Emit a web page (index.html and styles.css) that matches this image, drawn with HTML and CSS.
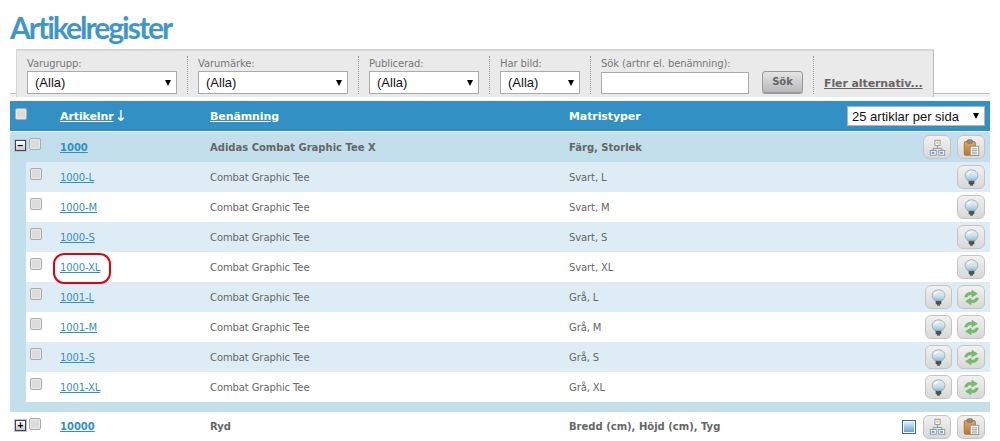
FILE: index.html
```html
<!DOCTYPE html>
<html lang="sv">
<head>
<meta charset="utf-8">
<title>Artikelregister</title>
<link rel="stylesheet" href="styles.css">
</head>
<body>
<svg class="defs" width="0" height="0" aria-hidden="true">
  <defs>
    <linearGradient id="bulb" x1="0" y1="0" x2="0" y2="1"><stop offset="0" stop-color="#e8eef1"/><stop offset=".55" stop-color="#cfe0ea"/><stop offset="1" stop-color="#7fbce0"/></linearGradient>
    <linearGradient id="clip" x1="0" y1="0" x2="0" y2="1"><stop offset="0" stop-color="#e2a762"/><stop offset="1" stop-color="#b9762e"/></linearGradient>
    <linearGradient id="win" x1="0" y1="0" x2="0" y2="1"><stop offset="0" stop-color="#dcebf6"/><stop offset="1" stop-color="#6aa3d3"/></linearGradient>
    <symbol id="i-tree" viewBox="0 0 20 20">
      <rect x="7" y="1.500" width="6" height="6" fill="#fff" stroke="#7f8d98"/><rect x="8.500" y="3" width="3" height="2.500" fill="#e8cf3a"/>
      <path d="M10 8v3M5 13.500v-2.500h10v2.500" fill="none" stroke="#7f8d98"/>
      <rect x="1.500" y="13.500" width="7" height="5.500" fill="#fff" stroke="#7f8d98"/><rect x="3" y="15" width="3.500" height="2.500" fill="#5aa9dd"/>
      <rect x="11.500" y="13.500" width="7" height="5.500" fill="#fff" stroke="#7f8d98"/><rect x="13" y="15" width="3.500" height="2.500" fill="#5aa9dd"/>
    </symbol>
    <symbol id="i-clip" viewBox="0 0 20 20">
      <rect x="1.500" y="3" width="13" height="16" rx="1.500" fill="url(#clip)" stroke="#a5692c"/>
      <rect x="5" y="1" width="6" height="4" rx="1" fill="#8f8f86" stroke="#77736a"/>
      <rect x="8.500" y="8.500" width="10" height="11" fill="#f6f6f3" stroke="#8e8e88"/>
      <path d="M10.500 11.500h6M10.500 13.500h6M10.500 15.500h6M10.500 17.500h6" stroke="#9a9a96"/>
    </symbol>
    <symbol id="i-bulb" viewBox="0 0 20 20">
      <path d="M10 1C5.600 1 2.500 4 2.500 7.600c0 3 2 4.400 3.400 6.400h8.200c1.400-2 3.400-3.400 3.400-6.400C17.500 4 14.400 1 10 1z" fill="url(#bulb)" stroke="#94a8b5"/>
      <path d="M5.500 6c1-1.800 2.600-2.600 4.500-2.600" fill="none" stroke="#fff" stroke-width="1.800"/>
      <rect x="6.800" y="14" width="6.400" height="4" fill="#6b6b64"/>
      <path d="M6.800 15.300h6.400M6.800 16.700h6.400" stroke="#3d3d38"/>
      <rect x="8.300" y="18" width="3.400" height="1.500" fill="#33332f"/>
    </symbol>
    <symbol id="i-sync" viewBox="0 0 20 20">
      <path d="M2 9.500C2.600 5.500 6 3.300 10.500 4V1.500l6.500 4-6.500 4V7C7.500 6.600 5.800 7.400 5 9.500z" fill="#74bd66" stroke="#5ea558" stroke-width=".5"/>
      <path d="M18 10.500c-.6 4-4 6.200-8.500 5.500v2.500l-6.500-4 6.500-4V13c3 .4 4.700-.4 5.500-2.500z" fill="#74bd66" stroke="#5ea558" stroke-width=".5"/>
    </symbol>
  </defs>
</svg>

<h1 class="title">Artikelregister</h1>

<div class="filter-wrap">
  <form class="filters">
    <div class="field f-group"><label>Varugrupp:</label><div class="select"><span>(Alla)</span><i class="caret"></i></div></div>
    <div class="field f-brand"><label>Varumärke:</label><div class="select"><span>(Alla)</span><i class="caret"></i></div></div>
    <div class="field f-pub"><label>Publicerad:</label><div class="select"><span>(Alla)</span><i class="caret"></i></div></div>
    <div class="field f-img"><label>Har bild:</label><div class="select"><span>(Alla)</span><i class="caret"></i></div></div>
    <div class="field f-search"><label>Sök (artnr el. benämning):</label><div class="search-line"><div class="input"></div><div class="btn-search">Sök</div></div></div>
    <div class="field f-more"><a href="#">Fler alternativ...</a></div>
  </form>
</div>
<div class="stripe"></div>

<div class="list">
  <div class="row head">
    <div class="col-tog"><b class="check"></b></div>
    <div class="col-nr"><a href="#">Artikelnr</a><span class="arrow">↓</span></div>
    <div class="col-name"><a href="#">Benämning</a></div>
    <div class="col-matrix">Matristyper</div>
    <div class="col-act"><div class="select per-page"><span>25 artiklar per sida</span><i class="caret"></i></div></div>
  </div>

  <div class="row group">
    <div class="col-tog"><b class="toggle">−</b><b class="check"></b></div>
    <div class="col-nr"><a href="#">1000</a></div>
    <div class="col-name">Adidas Combat Graphic Tee X</div>
    <div class="col-matrix">Färg, Storlek</div>
    <div class="col-act">
      <span class="ibtn"><svg><use href="#i-tree"/></svg></span>
      <span class="ibtn"><svg><use href="#i-clip"/></svg></span>
    </div>
  </div>

  <div class="children">
    <div class="row child">
      <div class="col-tog"><b class="check"></b></div>
      <div class="col-nr"><a href="#">1000-L</a></div>
      <div class="col-name">Combat Graphic Tee</div>
      <div class="col-matrix">Svart, L</div>
      <div class="col-act"><span class="ibtn"><svg><use href="#i-bulb"/></svg></span></div>
    </div>
    <div class="row child">
      <div class="col-tog"><b class="check"></b></div>
      <div class="col-nr"><a href="#">1000-M</a></div>
      <div class="col-name">Combat Graphic Tee</div>
      <div class="col-matrix">Svart, M</div>
      <div class="col-act"><span class="ibtn"><svg><use href="#i-bulb"/></svg></span></div>
    </div>
    <div class="row child">
      <div class="col-tog"><b class="check"></b></div>
      <div class="col-nr"><a href="#">1000-S</a></div>
      <div class="col-name">Combat Graphic Tee</div>
      <div class="col-matrix">Svart, S</div>
      <div class="col-act"><span class="ibtn"><svg><use href="#i-bulb"/></svg></span></div>
    </div>
    <div class="row child">
      <div class="col-tog"><b class="check"></b></div>
      <div class="col-nr"><a href="#" class="circled">1000-XL</a></div>
      <div class="col-name">Combat Graphic Tee</div>
      <div class="col-matrix">Svart, XL</div>
      <div class="col-act"><span class="ibtn"><svg><use href="#i-bulb"/></svg></span></div>
    </div>
    <div class="row child">
      <div class="col-tog"><b class="check"></b></div>
      <div class="col-nr"><a href="#">1001-L</a></div>
      <div class="col-name">Combat Graphic Tee</div>
      <div class="col-matrix">Grå, L</div>
      <div class="col-act"><span class="ibtn"><svg><use href="#i-bulb"/></svg></span><span class="ibtn"><svg><use href="#i-sync"/></svg></span></div>
    </div>
    <div class="row child">
      <div class="col-tog"><b class="check"></b></div>
      <div class="col-nr"><a href="#">1001-M</a></div>
      <div class="col-name">Combat Graphic Tee</div>
      <div class="col-matrix">Grå, M</div>
      <div class="col-act"><span class="ibtn"><svg><use href="#i-bulb"/></svg></span><span class="ibtn"><svg><use href="#i-sync"/></svg></span></div>
    </div>
    <div class="row child">
      <div class="col-tog"><b class="check"></b></div>
      <div class="col-nr"><a href="#">1001-S</a></div>
      <div class="col-name">Combat Graphic Tee</div>
      <div class="col-matrix">Grå, S</div>
      <div class="col-act"><span class="ibtn"><svg><use href="#i-bulb"/></svg></span><span class="ibtn"><svg><use href="#i-sync"/></svg></span></div>
    </div>
    <div class="row child">
      <div class="col-tog"><b class="check"></b></div>
      <div class="col-nr"><a href="#">1001-XL</a></div>
      <div class="col-name">Combat Graphic Tee</div>
      <div class="col-matrix">Grå, XL</div>
      <div class="col-act"><span class="ibtn"><svg><use href="#i-bulb"/></svg></span><span class="ibtn"><svg><use href="#i-sync"/></svg></span></div>
    </div>
  </div>

  <div class="row closed">
    <div class="col-tog"><b class="toggle">+</b><b class="check"></b></div>
    <div class="col-nr"><a href="#">10000</a></div>
    <div class="col-name">Ryd</div>
    <div class="col-matrix">Bredd (cm), Höjd (cm), Tyg</div>
    <div class="col-act">
      <svg class="win" viewBox="0 0 14 14"><rect x=".5" y=".5" width="13" height="13" fill="#fff" stroke="#2f6fa8"/><rect x="2" y="2" width="10" height="10" fill="url(#win)"/></svg>
      <span class="ibtn"><svg><use href="#i-tree"/></svg></span>
      <span class="ibtn"><svg><use href="#i-clip"/></svg></span>
    </div>
  </div>
</div>
</body>
</html>
```
FILE: styles.css
```css
* { box-sizing: border-box; }
html, body { margin: 0; padding: 0; height: 441px; overflow: hidden; background: #fff; }
body { font-family: "DejaVu Sans", Verdana, sans-serif; font-size: 10px; color: #666; padding: 0 10px; }
.defs { position: absolute; }
a { color: #3390c4; }

.title { margin: 0; height: 49px; padding-top: 9px; font-family: Lato, "Open Sans", sans-serif; font-size: 30px; line-height: 36px; font-weight: 700; letter-spacing: -2px; color: #3f97c9; }

.filter-wrap { height: 45px; border-bottom: 1px solid #bdbdbd; padding-left: 6px; }
.filters { display: flex; width: 918px; height: 48px; background: #eaeaea; border: 2px solid #d6d6d6; border-bottom: 0; border-right: 1px solid #bdbdbd; border-left-width: 1px; position: relative; padding-left: 10px; }
.stripe { height: 3px; background: #f2f2f2; margin-bottom: 4px; }
.field { display: flex; flex-direction: column; border-right: 1px dotted #999; margin-right: 10px; height: 38px; margin-top: 5px; }
.field label { height: 15px; line-height: 15px; font-size: 10px; color: #777; letter-spacing: -.1px; white-space: nowrap; }
.f-group { width: 161px; }
.f-brand { width: 161px; }
.f-pub { width: 121px; }
.f-img { width: 91px; }
.f-search { width: 213px; }
.f-more { border: 0; margin: 0; justify-content: flex-end; }
.f-more a { color: #666; font-weight: bold; font-size: 11px; letter-spacing: -.1px; line-height: 14px; white-space: nowrap; position: relative; top: 2px; }

.select { display: flex; align-items: center; justify-content: space-between; height: 23px; background: #fff; border: 1px solid #aaa; font-family: "Liberation Sans", Arial, sans-serif; font-size: 13px; font-weight: normal; color: #111; padding: 0 5px 0 7px; }
.f-group .select, .f-brand .select { width: 150px; }
.f-pub .select { width: 110px; }
.f-img .select { width: 80px; }
.caret { width: 0; height: 0; border: 3.5px solid transparent; border-top: 6px solid #000; border-bottom: 0; }
.search-line { display: flex; gap: 13px; }
.input { width: 148px; height: 22px; margin-top: 1px; background: #fff; border: 1px solid #aaa; }
.btn-search { width: 41px; height: 22px; border: 1px solid #999; border-radius: 3px; background: linear-gradient(#e4e4e4, #b9b9b9); font-weight: bold; font-size: 10px; line-height: 19px; text-align: center; color: #666; box-shadow: 0 1px 0 #999; }

.list { width: 980px; }
.row { display: flex; align-items: center; height: 30px; }
.col-tog { width: 40px; display: flex; align-items: center; gap: 3px; padding: 0 0 6px 5px; flex: none; }
.col-nr { width: 160px; flex: none; padding-left: 10px; }
.col-name { width: 359px; flex: none; }
.col-matrix { flex: 1; }
.col-act { display: flex; align-items: center; justify-content: flex-end; gap: 6px; padding-right: 5px; }

.check { display: block; width: 12px; height: 12px; border: 1px solid #aaa; border-radius: 2px; background: #dcdcdc; box-shadow: inset 0 0 0 1px #e9e9e9; }
.toggle { display: block; width: 11px; height: 11px; border: 1px solid #445; background: linear-gradient(#fff, #c8c8c8); color: #000; font: bold 10px/9px "Liberation Sans", sans-serif; text-align: center; box-shadow: 0 0 0 1px #b6c5d0; margin-top: 3px; }

.head { background: #3390c4; color: #fff; font-weight: bold; font-size: 11px; letter-spacing: -.1px; margin-bottom: 1px; }
.head a { color: #fff; }
.head .col-nr { display: flex; align-items: center; gap: 1px; }
.head .col-tog { padding-bottom: 4px; }
.arrow { font-weight: normal; font-size: 15px; line-height: 16px; }
.per-page { width: 138px; height: 20px; padding: 0 5px 0 4px; border-color: #b5b5b5; white-space: nowrap; letter-spacing: 0; font-size: 13px; }

.group { background: #c3dfec; font-weight: bold; }

.children { background: #c3dfec; padding: 0 0 10px 16px; }
.child { background: #deedf5; letter-spacing: -.1px; }
.child:nth-child(even) { background: #fff; }
.child .col-tog { width: 24px; padding-left: 4px; }
.child .col-act { gap: 5px; }
.child .ibtn:not(:last-child) { width: 27px; }

.closed { height: 29px; font-weight: bold; }

.ibtn { display: flex; align-items: center; justify-content: center; width: 28px; height: 24px; border: 1px solid #c4c4c4; border-radius: 6px; background: linear-gradient(#f1f1f1, #d8d8d8); }
.ibtn svg { width: 17px; height: 17px; }
.win { width: 14px; height: 14px; margin-right: 1px; }

.circled { position: relative; }
.circled::after { content: ""; position: absolute; left: -7px; right: -11px; top: -9px; bottom: -11px; border: 2px solid #e6000f; border-radius: 11px; }
```
